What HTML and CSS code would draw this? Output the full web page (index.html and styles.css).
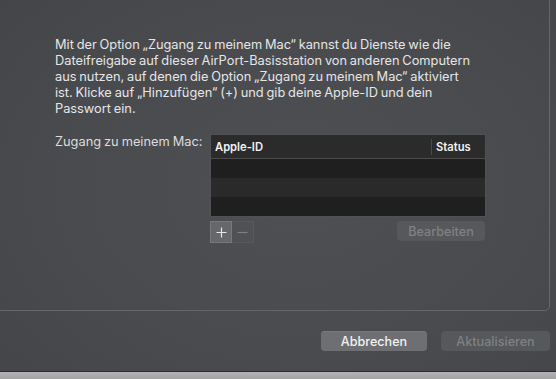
FILE: index.html
```html
<!DOCTYPE html>
<html lang="de">
<head>
<meta charset="utf-8">
<link rel="stylesheet" href="styles.css">
</head>
<body>
<div class="window">
  <div class="panel">
    <p class="intro">Mit der Option „Zugang zu meinem Mac“ kannst du Dienste wie die<br>Dateifreigabe auf dieser AirPort-Basisstation von anderen Computern<br>aus nutzen, auf denen die Option „Zugang zu meinem Mac“ aktiviert<br>ist. Klicke auf „Hinzufügen“ (+) und gib deine Apple-ID und dein<br>Passwort ein.</p>
    <div class="form-row">
      <div class="label">Zugang zu meinem Mac:</div>
      <div class="field">
        <div class="table">
          <div class="thead">
            <div class="th th-id">Apple-ID</div>
            <div class="th th-status">Status</div>
          </div>
          <div class="tr odd"></div>
          <div class="tr even"></div>
          <div class="tr odd"></div>
        </div>
        <div class="controls">
          <div class="seg">
            <div class="seg-btn seg-plus">
              <svg width="11" height="11" viewBox="0 0 11 11"><path d="M5.5 0.5v10M0.5 5.5h10" stroke="#e6e6e6" stroke-width="1.2" fill="none"/></svg>
            </div>
            <div class="seg-btn seg-minus">
              <svg width="11" height="11" viewBox="0 0 11 11"><path d="M0.5 5.5h10" stroke="#7d7f82" stroke-width="1.2" fill="none"/></svg>
            </div>
          </div>
          <div class="btn btn-disabled btn-edit">Bearbeiten</div>
        </div>
      </div>
    </div>
  </div>
  <div class="footer">
    <div class="btn btn-cancel">Abbrechen</div>
    <div class="btn btn-disabled btn-update">Aktualisieren</div>
  </div>
</div>
<div class="desk"></div>
</body>
</html>
```

FILE: styles.css
```css
html, body {
  margin: 0;
  padding: 0;
}
body {
  width: 556px;
  height: 379px;
  overflow: hidden;
  font-family: Inter, "Noto Sans", "Liberation Sans", sans-serif;
  background: #a9a9a9;
}
.window {
  height: 371px;
  border-bottom: 1px solid #2b2c2e;
  background: radial-gradient(ellipse 420px 300px at 300px 190px, #4e5054 0%, #484a4e 60%, #434549 100%);
  overflow: hidden;
  display: flex;
  flex-direction: column;
}
.desk {
  height: 7px;
  background: linear-gradient(#b4b4b4, #a2a2a2);
}
.panel {
  margin: -10px 0 0 -10px;
  width: 560px;
  height: 321px;
  box-sizing: border-box;
  border: 1px solid #65676a;
  border-radius: 5px;
  padding: 46px 0 0 64px;
}
.intro {
  margin: 0;
  font-size: 12.8px;
  line-height: 16px;
  color: #e6e6e6;
  word-spacing: -0.8px;
}
.form-row {
  display: flex;
  margin-top: 17px;
}
.label {
  width: 147px;
  text-align: right;
  font-size: 12.8px;
  word-spacing: -0.6px;
  color: #dcdcdc;
  padding-top: 0;
  margin-right: 8px;
  white-space: nowrap;
}
.field {
  width: 276px;
}
.table {
  border: 1px solid #4f5154;
  background: #1f1f1f;
}
.thead {
  display: flex;
  height: 23px;
  background: #2b2b2b;
  border-bottom: 1px solid #4c4c4c;
  align-items: center;
  font-size: 11.2px;
  font-weight: 600;
  color: #f2f2f2;
}
.th-id {
  flex: 1;
  padding-left: 4px;
}
.th-status {
  width: 49px;
  border-left: 1px solid #4a4a4a;
  padding-left: 4px;
  height: 16px;
  line-height: 16px;
}
.tr {
  height: 19px;
}
.tr.odd { background: #1f1f1f; }
.tr.even { background: #2a2a2a; }
.controls {
  display: flex;
  justify-content: space-between;
  align-items: flex-start;
  margin-top: 4px;
}
.seg {
  display: flex;
}
.seg-btn {
  width: 22px;
  height: 22px;
  display: flex;
  align-items: center;
  justify-content: center;
  box-sizing: border-box;
}
.seg-plus {
  background: #65676a;
  border: 1px solid #76787b;
}
.seg-minus {
  background: #4f5154;
  border: 1px solid #56585b;
  border-left: none;
}
.btn {
  box-sizing: border-box;
  height: 20px;
  border-radius: 4px;
  display: flex;
  align-items: center;
  justify-content: center;
  font-size: 12.6px;
  font-weight: 500;
}
.btn-disabled {
  background: #56585b;
  color: #7f8184;
}
.btn-edit {
  width: 88px;
  margin-right: 1px;
}
.footer {
  display: flex;
  justify-content: flex-end;
  gap: 14px;
  padding: 20px 6px 0 0;
}
.btn-cancel {
  width: 106px;
  background: #6d6f72;
  color: #f2f2f2;
  box-shadow: 0 0.5px 0 #808285 inset;
}
.btn-update {
  width: 109px;
}
```
